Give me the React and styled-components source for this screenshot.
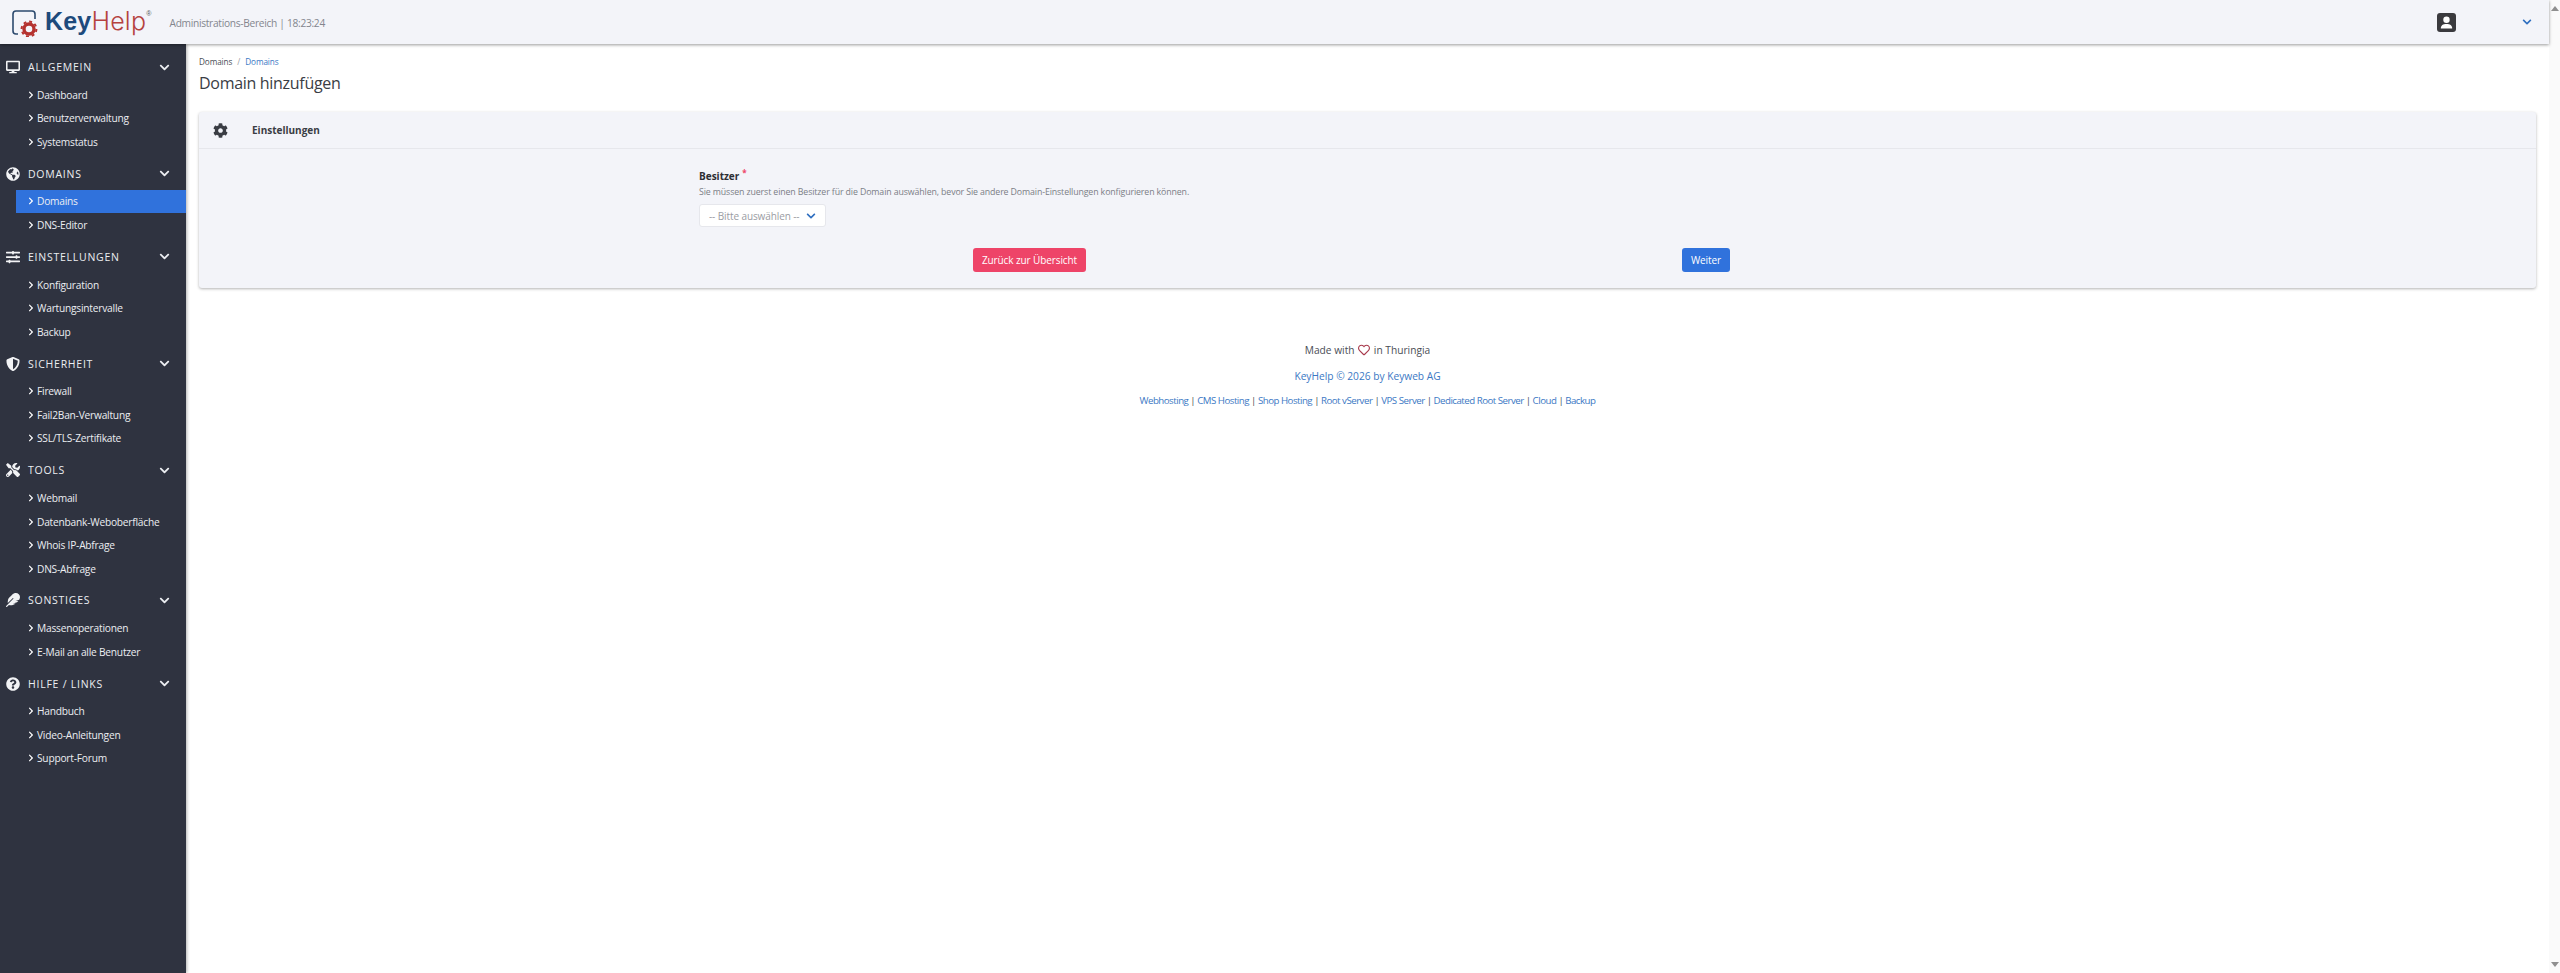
import React from 'react'
import styled, { createGlobalStyle } from 'styled-components'
import {
  FaDesktop, FaGlobeAmericas, FaSlidersH, FaShieldAlt, FaTools, FaFeather, FaQuestionCircle,
  FaChevronDown, FaChevronRight, FaCog, FaRegHeart,
} from 'react-icons/fa'

const menu = [
  { title: 'ALLGEMEIN', icon: FaDesktop, items: ['Dashboard', 'Benutzerverwaltung', 'Systemstatus'] },
  { title: 'DOMAINS', icon: FaGlobeAmericas, items: ['Domains', 'DNS-Editor'] },
  { title: 'EINSTELLUNGEN', icon: FaSlidersH, items: ['Konfiguration', 'Wartungsintervalle', 'Backup'] },
  { title: 'SICHERHEIT', icon: FaShieldAlt, items: ['Firewall', 'Fail2Ban-Verwaltung', 'SSL/TLS-Zertifikate'] },
  { title: 'TOOLS', icon: FaTools, items: ['Webmail', 'Datenbank-Weboberfläche', 'Whois IP-Abfrage', 'DNS-Abfrage'] },
  { title: 'SONSTIGES', icon: FaFeather, items: ['Massenoperationen', 'E-Mail an alle Benutzer'] },
  { title: 'HILFE / LINKS', icon: FaQuestionCircle, items: ['Handbuch', 'Video-Anleitungen', 'Support-Forum'] },
]

const footerLinks = ['Webhosting', 'CMS Hosting', 'Shop Hosting', 'Root vServer', 'VPS Server', 'Dedicated Root Server', 'Cloud', 'Backup']

export default function App() {
  return (
    <Page>
      <GlobalStyle />
      <Main>
        <Topbar>
          <Logo>
            <svg width="32" height="30" viewBox="0 0 32 30">
              <path d="M14 4 H6 a3 3 0 0 0 -3 3 V24 a3 3 0 0 0 3 3 H8 M14 4 H22 a3 3 0 0 1 3 3 V12" fill="none" stroke="#2c4a6e" strokeWidth="1.6" />
              <circle cx="19" cy="22" r="5" fill="none" stroke="#b5322f" strokeWidth="3.4" />
              <circle cx="19" cy="22" r="7.4" fill="none" stroke="#b5322f" strokeWidth="2" strokeDasharray="2.9 2.9" />
            </svg>
            <LogoText><b>Key</b><span>Help</span><sup>®</sup></LogoText>
          </Logo>
          <TopInfo>Administrations-Bereich | 18:23:24</TopInfo>
          <TopRight>
            <svg width="19" height="19" viewBox="0 0 19 19">
              <rect width="19" height="19" rx="3" fill="#3a3a3e" />
              <circle cx="9.5" cy="6.8" r="3.2" fill="#fff" />
              <path d="M3.8 15.5 c0-3.4 2.2-4.6 5.7-4.6 s5.700 1.200 5.700 4.600z" fill="#fff" />
            </svg>
            <FaChevronDown />
          </TopRight>
        </Topbar>
        <Body>
          <Sidebar>
            {menu.map((section) => (
              <Section key={section.title}>
                <SectionHead>
                  <section.icon />
                  <span>{section.title}</span>
                  <FaChevronDown />
                </SectionHead>
                {section.items.map((item) => (
                  <MenuItem key={item} $active={item === 'Domains'}>
                    <FaChevronRight />
                    {item}
                  </MenuItem>
                ))}
              </Section>
            ))}
          </Sidebar>
          <Content>
            <Breadcrumb>Domains <i>/</i> <a>Domains</a></Breadcrumb>
            <Title>Domain hinzufügen</Title>
            <Card>
              <CardHead>
                <FaCog />
                <span>Einstellungen</span>
              </CardHead>
              <CardBody>
                <Form>
                  <Label>Besitzer<sup>*</sup></Label>
                  <Hint>Sie müssen zuerst einen Besitzer für die Domain auswählen, bevor Sie andere Domain-Einstellungen konfigurieren können.</Hint>
                  <Select>
                    -- Bitte auswählen --
                    <FaChevronDown />
                  </Select>
                  <Actions>
                    <Button $color="#ee4468">Zurück zur Übersicht</Button>
                    <Button $color="#3072dc">Weiter</Button>
                  </Actions>
                </Form>
              </CardBody>
            </Card>
            <Footer>
              <Made>Made with <FaRegHeart /> in Thuringia</Made>
              <Copy>KeyHelp © 2026 by Keyweb AG</Copy>
              <Links>
                {footerLinks.map((link, i) => (
                  <React.Fragment key={link}>
                    {i > 0 && <em> | </em>}
                    <a>{link}</a>
                  </React.Fragment>
                ))}
              </Links>
            </Footer>
          </Content>
        </Body>
      </Main>
      <Scrollbar>
        <svg width="8" height="5" viewBox="0 0 8 5"><path d="M4 0 L8 5 H0z" fill="#8f8f8f" /></svg>
        <svg width="8" height="5" viewBox="0 0 8 5"><path d="M4 5 L8 0 H0z" fill="#8f8f8f" /></svg>
      </Scrollbar>
    </Page>
  )
}

const GlobalStyle = createGlobalStyle`
  html, body {
    margin: 0;
    height: 100%;
    overflow: hidden;
    background: #fff;
    font-family: "Open Sans", "Noto Sans", sans-serif;
  }
  #root {
    height: 100%;
  }
`

const Page = styled.div`
  display: flex;
  height: 973px;
`

const Main = styled.div`
  flex: 1;
  min-width: 0;
  display: flex;
  flex-direction: column;
`

const Topbar = styled.header`
  height: 44px;
  flex: none;
  display: flex;
  align-items: center;
  background: #f3f4f9;
  box-shadow: 0 1px 3px rgba(0, 0, 0, 0.4);
  padding: 0 17px 0 10px;
  position: relative;
  z-index: 2;
`

const Logo = styled.div`
  display: flex;
  align-items: center;
  gap: 3px;
`

const LogoText = styled.div`
  font-family: "Liberation Sans", Arial, sans-serif;
  font-size: 25px;
  letter-spacing: 0.2px;
  line-height: 1;
  margin-top: -2px;
  b {
    color: #1d4a7c;
  }
  span {
    font-family: Inter, "Liberation Sans", sans-serif;
    font-weight: 300;
    color: #b5423f;
  }
  sup {
    font-size: 7px;
    color: #555;
    vertical-align: 14px;
    line-height: 0;
  }
`

const TopInfo = styled.div`
  margin: 2px 0 0 18px;
  font-size: 10.2px;
  letter-spacing: -0.3px;
  color: #83868e;
`

const TopRight = styled.div`
  margin-left: auto;
  display: flex;
  align-items: center;
  gap: 66px;
  svg:last-child {
    color: #2f6fc0;
    font-size: 10px;
  }
`

const Body = styled.div`
  flex: 1;
  display: flex;
  min-height: 0;
`

const Sidebar = styled.nav`
  width: 186px;
  flex: none;
  background: #2f3340;
  box-shadow: 1px 0 3px rgba(0, 0, 0, 0.3);
  padding-top: 11px;
  box-sizing: border-box;
`

const Section = styled.div`
  margin-bottom: 8.2px;
`

const SectionHead = styled.div`
  height: 24px;
  display: flex;
  align-items: center;
  padding: 0 16px 0 6px;
  color: #eceef2;
  font-size: 10.5px;
  letter-spacing: 0.75px;
  margin-bottom: 4px;
  svg:first-child {
    width: 14px;
    height: 14px;
    flex: none;
    color: #f2f3f5;
  }
  span {
    margin-left: 8px;
  }
  svg:last-child {
    margin-left: auto;
    width: 11px;
    height: 11px;
    flex: none;
  }
`

const MenuItem = styled.div`
  height: 23.5px;
  display: flex;
  align-items: center;
  margin-left: 16px;
  padding-left: 11px;
  font-size: 10.2px;
  letter-spacing: -0.22px;
  color: #eceef2;
  background: ${(p) => (p.$active ? '#3072dc' : 'transparent')};
  svg {
    width: 8px;
    height: 8px;
    margin-right: 2px;
    flex: none;
    color: #fff;
  }
`

const Content = styled.main`
  flex: 1;
  min-width: 0;
  padding: 12px 13px 0 13px;
`

const Breadcrumb = styled.div`
  font-size: 8.2px;
  letter-spacing: -0.1px;
  color: #4a4d55;
  line-height: 12px;
  i {
    font-style: normal;
    color: #9a9ca3;
    margin: 0 3px;
  }
  a {
    color: #3b78c4;
  }
`

const Title = styled.h1`
  margin: 3px 0 17px;
  font-size: 16px;
  letter-spacing: -0.3px;
  font-weight: 400;
  line-height: 24px;
  color: #3a3d44;
`

const Card = styled.section`
  background: #f3f4f9;
  border-radius: 3px;
  box-shadow: 0 1px 3px rgba(0, 0, 0, 0.3);
`

const CardHead = styled.div`
  height: 37px;
  box-sizing: border-box;
  display: flex;
  align-items: center;
  padding-left: 14px;
  border-bottom: 1px solid #e6e7ec;
  color: #3a3d44;
  svg {
    width: 15px;
    height: 15px;
  }
  span {
    margin-left: 24px;
    font-size: 10px;
    font-weight: 700;
  }
`

const CardBody = styled.div`
  display: flex;
  padding: 20px 0 16px 500px;
`

const Form = styled.div`
  width: 1353px;
`

const Label = styled.div`
  font-size: 10px;
  font-weight: 700;
  color: #2c2e33;
  line-height: 14px;
  sup {
    color: #ee4468;
    font-size: 8px;
    margin-left: 3px;
    line-height: 0;
  }
`

const Hint = styled.div`
  font-size: 8.8px;
  letter-spacing: -0.12px;
  color: #7b7e86;
  line-height: 14px;
  margin-top: 2px;
`

const Select = styled.div`
  width: 127px;
  height: 23px;
  margin-top: 5px;
  box-sizing: border-box;
  display: flex;
  align-items: center;
  justify-content: space-between;
  padding: 0 9px;
  background: #fff;
  border: 1px solid #e6e7ec;
  border-radius: 3px;
  font-size: 10px;
  letter-spacing: -0.1px;
  white-space: nowrap;
  color: #9a9ca3;
  svg {
    width: 10px;
    height: 10px;
    color: #2f6fc0;
    flex: none;
  }
`

const Actions = styled.div`
  display: grid;
  grid-template-columns: 661px 692px;
  justify-items: center;
  margin-top: 21px;
`

const Button = styled.button`
  height: 24px;
  padding: 0 9px;
  border: none;
  border-radius: 3px;
  background: ${(p) => p.$color};
  color: #fff;
  font-family: inherit;
  font-size: 10px;
  letter-spacing: -0.1px;
`

const Footer = styled.footer`
  text-align: center;
  margin-top: 55px;
  font-size: 10.2px;
  color: #4a4d55;
  a {
    color: #3b78c4;
  }
`

const Made = styled.div`
  line-height: 14px;
  svg {
    width: 14px;
    height: 12px;
    color: #a83a4c;
    vertical-align: -2px;
  }
`

const Copy = styled.div`
  line-height: 14px;
  margin-top: 12px;
  color: #3b78c4;
`

const Links = styled.div`
  line-height: 14px;
  margin-top: 11px;
  font-size: 9.7px;
  letter-spacing: -0.5px;
  em {
    font-style: normal;
    color: #4a4d55;
  }
`

const Scrollbar = styled.aside`
  width: 11px;
  flex: none;
  display: flex;
  flex-direction: column;
  justify-content: space-between;
  align-items: center;
  padding: 6px 0;
  box-sizing: border-box;
  background: #fafafa;
`
